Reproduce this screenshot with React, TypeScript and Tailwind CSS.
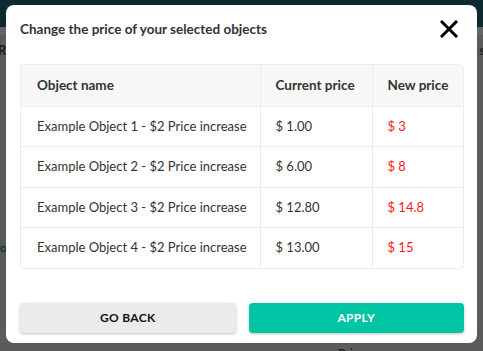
import React from 'react';

const rows = [
  { name: 'Example Object 1 - $2 Price increase', current: '$ 1.00', next: '$ 3' },
  { name: 'Example Object 2 - $2 Price increase', current: '$ 6.00', next: '$ 8' },
  { name: 'Example Object 3 - $2 Price increase', current: '$ 12.80', next: '$ 14.8' },
  { name: 'Example Object 4 - $2 Price increase', current: '$ 13.00', next: '$ 15' },
];

const App: React.FC = () => (
  <div
    className="relative h-[351px] w-[483px] overflow-hidden bg-[#5b5b5b]"
    style={{ fontFamily: 'Lato, "Noto Sans", sans-serif' }}
  >
    {/* page behind the overlay */}
    <div className="h-[27px] bg-[#0f2930]" />
    <div className="h-[8px] bg-[#646464]" />
    <div className="flex justify-between pt-[6px] text-[13px] font-bold text-[#1e1e1e]">
      <span className="-ml-[2px]">RI</span>
      <span className="-mr-[2px]">s</span>
    </div>
    <div className="mt-[180px] h-[14px] w-[20px] bg-[#4e5a5c] text-[12px] leading-[14px] text-[#1e1e1e]">
      ob
    </div>

    {/* modal */}
    <div className="absolute left-[6px] top-[5px] flex h-[338px] w-[471px] flex-col rounded-lg bg-white pl-[14px] pr-[13px]">
      <div className="flex h-[47px] items-center justify-between pt-[1px]">
        <h2 className="text-[13.5px] font-bold text-[#333]">Change the price of your selected objects</h2>
        <svg width="18" height="18" viewBox="0 0 18 18" className="mr-[6px]">
          <path d="M2 2L16 16M16 2L2 16" stroke="#000" strokeWidth="3" strokeLinecap="square" />
        </svg>
      </div>

      <div className="mt-[12px] overflow-hidden rounded border border-[#ececec] text-[13px] text-[#333]">
        <table className="w-full table-fixed border-collapse whitespace-nowrap">
          <colgroup>
            <col className="w-[239px]" />
            <col className="w-[112px]" />
            <col />
          </colgroup>
          <thead>
            <tr className="h-[41px] bg-[#f7f7f7] text-left text-[13.5px] font-bold">
              <th className="pl-[16px]">Object name</th>
              <th className="border-l border-[#ececec] pl-[15px]">Current price</th>
              <th className="border-l border-[#ececec] pl-[15px]">New price</th>
            </tr>
          </thead>
          <tbody>
            {rows.map((r) => (
              <tr key={r.name} className="h-[40.5px] border-t border-[#ececec]">
                <td className="pl-[16px]">{r.name}</td>
                <td className="border-l border-[#ececec] pl-[15px]">{r.current}</td>
                <td className="border-l border-[#ececec] pl-[15px] text-[#ff1a1a]">{r.next}</td>
              </tr>
            ))}
          </tbody>
        </table>
      </div>

      <div className="mt-[34px] flex gap-[13px]">
        <button className="h-[30px] flex-1 rounded bg-[#ebebeb] text-[12px] font-bold tracking-wide text-[#111] shadow-[0_1px_3px_rgba(0,0,0,0.25)]">
          GO BACK
        </button>
        <button className="h-[30px] flex-1 rounded bg-[#00c4a4] text-[12px] font-bold tracking-wide text-white shadow-[0_1px_3px_rgba(0,0,0,0.25)]">
          APPLY
        </button>
      </div>
    </div>

    <div className="absolute left-[338px] top-[344px] text-[12px] font-bold text-[#1e1e1e]">Price</div>
  </div>
);

export default App;
